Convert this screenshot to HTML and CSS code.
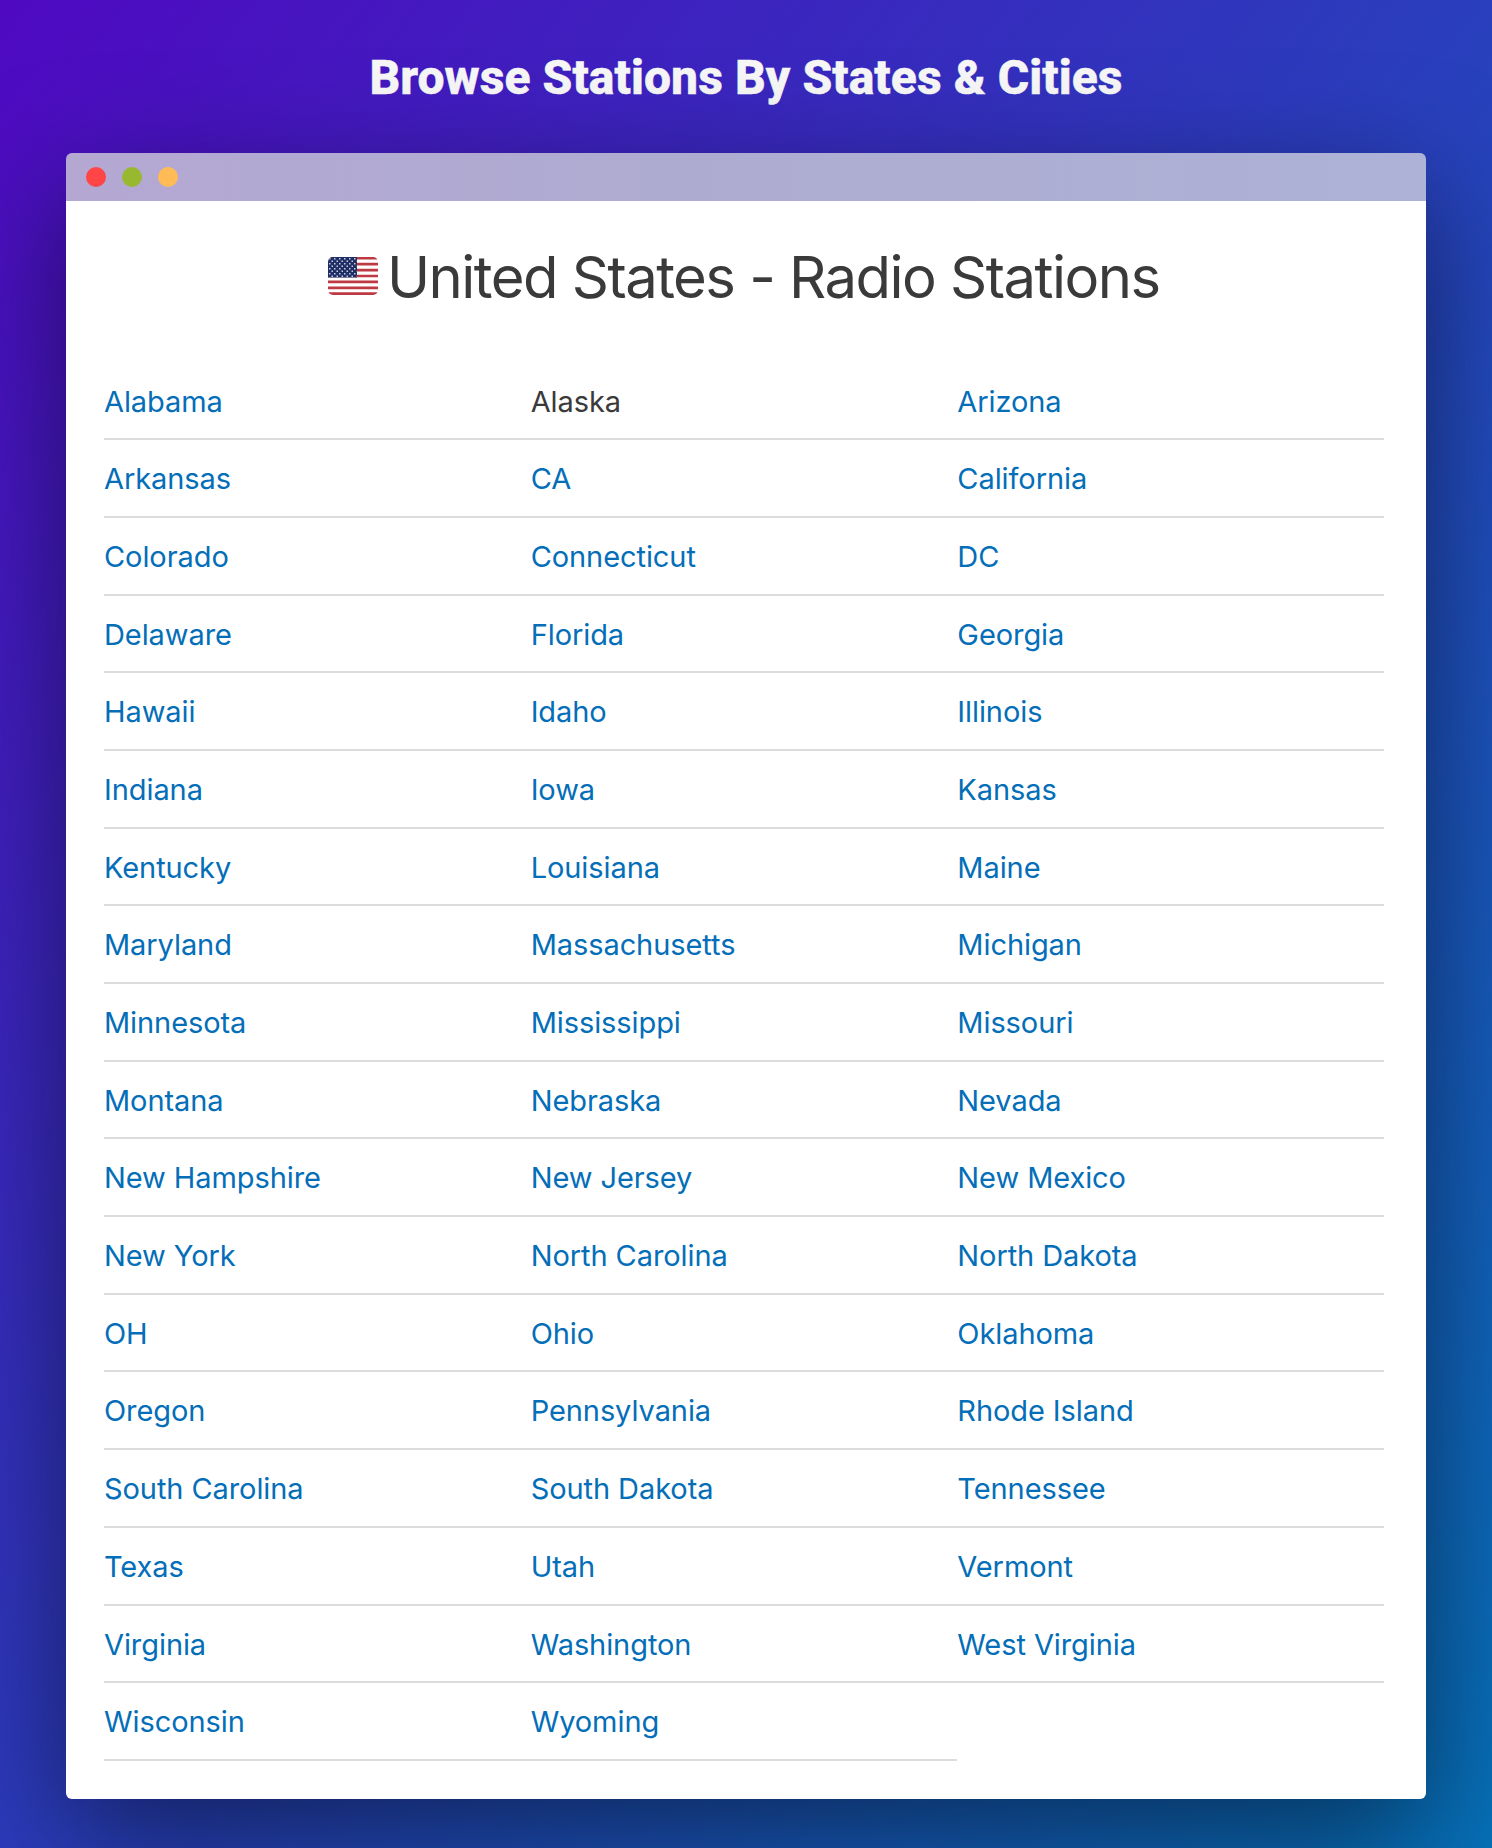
FILE: index.html
```
<!DOCTYPE html>
<html lang="en">
<head>
<meta charset="utf-8">
<title>Browse Stations By States &amp; Cities</title>
<link rel="stylesheet" href="styles.css">
</head>
<body>
<main class="page">
<h1 class="heading">Browse Stations By States &amp; Cities</h1>
<section class="window">
<div class="bar"><i class="dot red"></i><i class="dot green"></i><i class="dot amber"></i></div>
<div class="content">
<h2 class="title">
<svg class="flag" viewBox="0 0 50 38">
<defs>
<clipPath id="round"><rect width="50" height="38" rx="5"/></clipPath>
<pattern id="stars" width="5" height="5" patternUnits="userSpaceOnUse"><path d="M1 1h1.5v1.5H1zM3.5 3.5H5V5H3.500z" fill="#c3cbe0"/></pattern>
</defs>
<g clip-path="url(#round)">
<rect width="50" height="38" fill="#fff"/>
<path d="M0 1.200h50M0 7.130h50M0 13.070h50M0 19h50M0 24.930h50M0 30.870h50M0 36.600h50" stroke="#be3a43" stroke-width="2.700"/>
<rect width="29" height="20.500" fill="#1f2f66"/>
<rect width="28.500" height="20" fill="url(#stars)"/>
</g>
</svg>
<span class="title-text">United States - Radio Stations</span>
</h2>
<ul class="states">
<li><a href="#">Alabama</a></li><li><a href="#" class="active">Alaska</a></li><li><a href="#">Arizona</a></li>
<li><a href="#">Arkansas</a></li><li><a href="#">CA</a></li><li><a href="#">California</a></li>
<li><a href="#">Colorado</a></li><li><a href="#">Connecticut</a></li><li><a href="#">DC</a></li>
<li><a href="#">Delaware</a></li><li><a href="#">Florida</a></li><li><a href="#">Georgia</a></li>
<li><a href="#">Hawaii</a></li><li><a href="#">Idaho</a></li><li><a href="#">Illinois</a></li>
<li><a href="#">Indiana</a></li><li><a href="#">Iowa</a></li><li><a href="#">Kansas</a></li>
<li><a href="#">Kentucky</a></li><li><a href="#">Louisiana</a></li><li><a href="#">Maine</a></li>
<li><a href="#">Maryland</a></li><li><a href="#">Massachusetts</a></li><li><a href="#">Michigan</a></li>
<li><a href="#">Minnesota</a></li><li><a href="#">Mississippi</a></li><li><a href="#">Missouri</a></li>
<li><a href="#">Montana</a></li><li><a href="#">Nebraska</a></li><li><a href="#">Nevada</a></li>
<li><a href="#">New Hampshire</a></li><li><a href="#">New Jersey</a></li><li><a href="#">New Mexico</a></li>
<li><a href="#">New York</a></li><li><a href="#">North Carolina</a></li><li><a href="#">North Dakota</a></li>
<li><a href="#">OH</a></li><li><a href="#">Ohio</a></li><li><a href="#">Oklahoma</a></li>
<li><a href="#">Oregon</a></li><li><a href="#">Pennsylvania</a></li><li><a href="#">Rhode Island</a></li>
<li><a href="#">South Carolina</a></li><li><a href="#">South Dakota</a></li><li><a href="#">Tennessee</a></li>
<li><a href="#">Texas</a></li><li><a href="#">Utah</a></li><li><a href="#">Vermont</a></li>
<li><a href="#">Virginia</a></li><li><a href="#">Washington</a></li><li><a href="#">West Virginia</a></li>
<li><a href="#">Wisconsin</a></li><li><a href="#">Wyoming</a></li>
</ul>
</div>
</section>
</main>
</body>
</html>
```
FILE: styles.css
```
* { box-sizing: border-box; }
body { margin: 0; }
.page {
  height: 1848px;
  padding: 48px 66px 49px;
  display: flex;
  flex-direction: column;
  overflow: hidden;
  background: linear-gradient(127deg, #4f09c1, #0671b8);
}
.heading {
  margin: 0 0 45px;
  font: 800 48px/60px Roboto, sans-serif;
  letter-spacing: .07px;
  -webkit-text-stroke: .5px #f7f7f7;
  color: #f7f7f7;
  text-align: center;
  white-space: nowrap;
}
.window {
  flex: 1;
  border-radius: 6px;
  box-shadow: 0 40px 120px rgba(0, 0, 0, .5);
}
.bar {
  height: 48px;
  padding-left: 20px;
  display: flex;
  align-items: center;
  gap: 16px;
  background: linear-gradient(90deg, #b4a8d3, #aeabd1 45%, #adb2d6);
  border-radius: 6px 6px 0 0;
}
.dot { width: 20px; height: 20px; border-radius: 50%; }
.red { background: #ff4545; }
.green { background: #98b92f; }
.amber { background: #ffbb55; }
.content {
  height: 1598px;
  padding: 40px 42px 0 38px;
  background: #fff;
  border-radius: 0 0 6px 6px;
  font-family: Inter, sans-serif;
}
.title {
  margin: 0 0 49.5px;
  height: 72px;
  padding-left: 224px;
  display: flex;
  align-items: center;
  color: #3a3a3a;
  font-weight: 400;
  font-size: 58px;
  line-height: 72px;
  letter-spacing: -1.54px;
  white-space: nowrap;
}
.flag { width: 50px; height: 38px; margin: 0 9px 2px 0; }
.states {
  margin: 0;
  padding: 0;
  list-style: none;
  display: grid;
  grid-template-columns: repeat(3, 1fr);
  grid-auto-rows: 77.7px;
}
.states li {
  padding-top: 18px;
  border-bottom: 2px solid #dcdcdc;
  font-size: 29px;
  line-height: 42px;
  letter-spacing: -.08px;
}
.states a { color: #046eb8; text-decoration: none; }
.states a.active { color: #3a3a3a; }
```
